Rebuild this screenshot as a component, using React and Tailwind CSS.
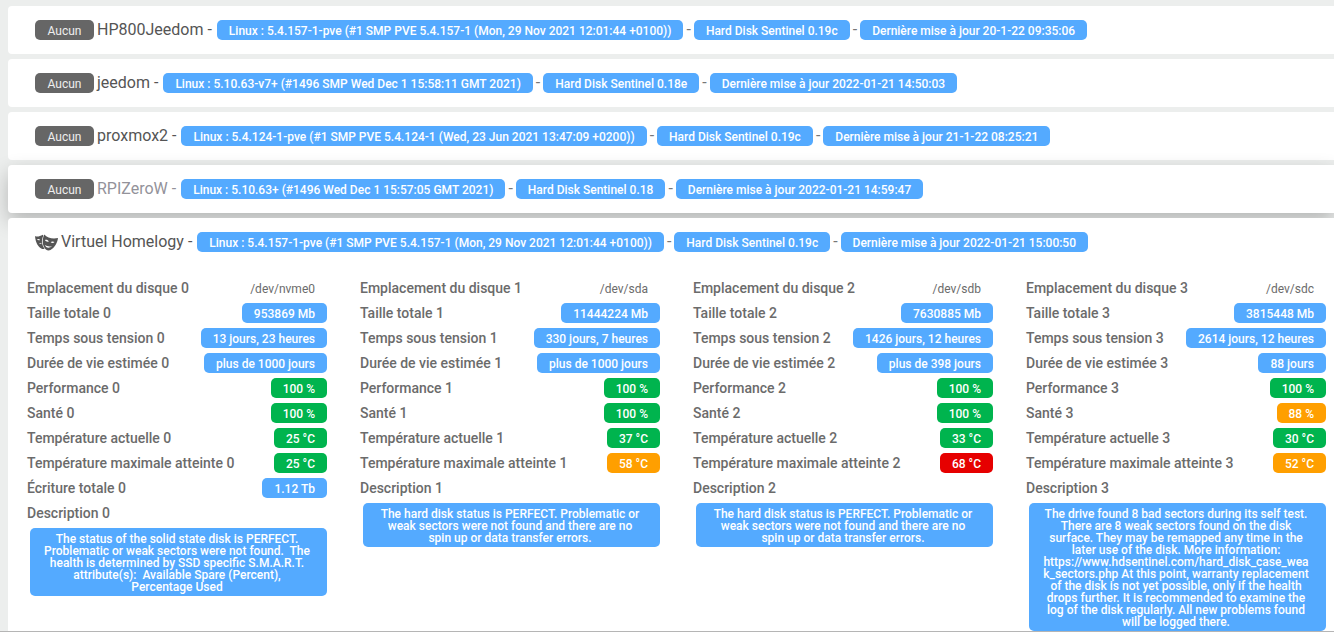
import React from "react";

const COLORS = {
  blue: "bg-[#54aaff]",
  green: "bg-[#00b44e]",
  orange: "bg-[#ff9f00]",
  red: "bg-[#e60000]",
};

const machines = [
  { name: "HP800Jeedom", tags: ["Linux : 5.4.157-1-pve (#1 SMP PVE 5.4.157-1 (Mon, 29 Nov 2021 12:01:44 +0100))", "Hard Disk Sentinel 0.19c", "Dernière mise à jour 20-1-22 09:35:06"] },
  { name: "jeedom", tags: ["Linux : 5.10.63-v7+ (#1496 SMP Wed Dec 1 15:58:11 GMT 2021)", "Hard Disk Sentinel 0.18e", "Dernière mise à jour 2022-01-21 14:50:03"] },
  { name: "proxmox2", tags: ["Linux : 5.4.124-1-pve (#1 SMP PVE 5.4.124-1 (Wed, 23 Jun 2021 13:47:09 +0200))", "Hard Disk Sentinel 0.19c", "Dernière mise à jour 21-1-22 08:25:21"] },
  { name: "RPIZeroW", raised: true, tags: ["Linux : 5.10.63+ (#1496 Wed Dec 1 15:57:05 GMT 2021)", "Hard Disk Sentinel 0.18", "Dernière mise à jour 2022-01-21 14:59:47"] },
];

const opened = {
  name: "Virtuel Homelogy",
  icon: true,
  tags: ["Linux : 5.4.157-1-pve (#1 SMP PVE 5.4.157-1 (Mon, 29 Nov 2021 12:01:44 +0100))", "Hard Disk Sentinel 0.19c", "Dernière mise à jour 2022-01-21 15:00:50"],
};

const PERFECT = "The hard disk status is PERFECT. Problematic or weak sectors were not found and there are no spin up or data transfer errors.";

const disks = [
  {
    path: "/dev/nvme0",
    rows: [
      ["Taille totale", "953869 Mb", "blue"],
      ["Temps sous tension", "13 jours, 23 heures", "blue"],
      ["Durée de vie estimée", "plus de 1000 jours", "blue"],
      ["Performance", "100 %", "green"],
      ["Santé", "100 %", "green"],
      ["Température actuelle", "25 °C", "green"],
      ["Température maximale atteinte", "25 °C", "green"],
      ["Écriture totale", "1.12 Tb", "blue"],
    ],
    description: "The status of the solid state disk is PERFECT. Problematic or weak sectors were not found.\u00a0 The health is determined by SSD specific S.M.A.R.T. attribute(s):\u00a0 Available Spare (Percent), Percentage Used",
  },
  {
    path: "/dev/sda",
    rows: [
      ["Taille totale", "11444224 Mb", "blue"],
      ["Temps sous tension", "330 jours, 7 heures", "blue"],
      ["Durée de vie estimée", "plus de 1000 jours", "blue"],
      ["Performance", "100 %", "green"],
      ["Santé", "100 %", "green"],
      ["Température actuelle", "37 °C", "green"],
      ["Température maximale atteinte", "58 °C", "orange"],
    ],
    description: PERFECT,
  },
  {
    path: "/dev/sdb",
    rows: [
      ["Taille totale", "7630885 Mb", "blue"],
      ["Temps sous tension", "1426 jours, 12 heures", "blue"],
      ["Durée de vie estimée", "plus de 398 jours", "blue"],
      ["Performance", "100 %", "green"],
      ["Santé", "100 %", "green"],
      ["Température actuelle", "33 °C", "green"],
      ["Température maximale atteinte", "68 °C", "red"],
    ],
    description: PERFECT,
  },
  {
    path: "/dev/sdc",
    rows: [
      ["Taille totale", "3815448 Mb", "blue"],
      ["Temps sous tension", "2614 jours, 12 heures", "blue"],
      ["Durée de vie estimée", "88 jours", "blue"],
      ["Performance", "100 %", "green"],
      ["Santé", "88 %", "orange"],
      ["Température actuelle", "30 °C", "green"],
      ["Température maximale atteinte", "52 °C", "orange"],
    ],
    description: "The drive found 8 bad sectors during its self test. There are 8 weak sectors found on the disk surface. They may be remapped any time in the later use of the disk. More information: https://www.hdsentinel.com/hard_disk_case_weak_sectors.php At this point, warranty replacement of the disk is not yet possible, only if the health drops further. It is recommended to examine the log of the disk regularly. All new problems found will be logged there.",
  },
];

function MasksIcon() {
  return (
    <svg viewBox="0 0 22 16" className="h-[17px] w-[23px]" fill="currentColor" aria-hidden="true">
      <path
        fillRule="evenodd"
        d="M0 1.8C1.5 2.8 4.6 2.4 7.4 .6L8 1.6C6.8 3.8 6.4 6.4 6.8 8.8C7.2 11 8 12.6 9.2 14C8.2 14.5 7 14.4 6 13.8C3 12 .6 8.6 0 1.8ZM2 4.9C2.6 5.8 3.8 6 5 5.5C4.2 4.7 3 4.4 2 4.9ZM3.8 9.6C4.3 8.7 5 8.3 5.9 8.2L6.2 9.2C5.4 9.1 4.5 9.2 3.8 9.6Z"
      />
      <path
        fillRule="evenodd"
        d="M8.9 .4C11.8 3.8 17 5 22 3.8C21.6 8 18.6 13.4 14.8 15.2C13.3 15.9 11.7 15.7 10.4 14.6C6.9 11.4 6.5 5 8.9 .4ZM9.5 5.6C10.2 7 11.8 7.6 13.2 7C12.5 5.6 11 5 9.5 5.6ZM14.9 7.6C15.9 8.7 17.6 8.7 18.7 7.6C17.6 6.7 16.1 6.7 14.9 7.6ZM9.4 10.5C10.4 13.2 13.4 13.9 16.2 11.6C13.6 12.1 11.2 11.7 9.4 10.5Z"
      />
    </svg>
  );
}

function Badge({ color, children }) {
  return (
    <span className={`inline-block h-5 rounded-[5px] px-3 text-xs leading-[22px] font-medium whitespace-nowrap text-white ${COLORS[color]}`}>
      {children}
    </span>
  );
}

function Heading({ machine }) {
  return (
    <h2 className="flex h-12 items-center pl-[27px] text-base whitespace-nowrap text-[#777777]">
      <a href="#" className={`flex items-center gap-[3px] ${machine.raised ? "text-[#93929a]" : "text-[#555555]"}`}>
        {machine.icon ? (
          <MasksIcon />
        ) : (
          <span className="inline-block h-5 min-w-[59px] rounded-[5px] bg-[#666666] px-3 text-center text-xs leading-[22px] text-[#eeeeee]">Aucun</span>
        )}
        <span>{machine.name} -</span>
      </a>
      <span className="ml-[5px] flex items-center gap-[3px]">
        {machine.tags.map((tag, i) => (
          <React.Fragment key={tag}>
            {i > 0 && <span>-</span>}
            <Badge color="blue">{tag}</Badge>
          </React.Fragment>
        ))}
      </span>
    </h2>
  );
}

function Disk({ disk, index }) {
  return (
    <div className="min-w-0">
      <table className="block w-full">
        <tbody className="block">
          <tr className="flex h-[25px] justify-between pt-[2px]">
            <th scope="row" className="text-left text-sm leading-5 font-medium">Emplacement du disque {index}</th>
            <td className="pr-3 text-xs leading-[22px]">{disk.path}</td>
          </tr>
          {disk.rows.map(([label, value, color]) => (
            <tr key={label} className="flex h-[25px] justify-between pt-[2px]">
              <th scope="row" className="text-left text-sm leading-5 font-medium">{label} {index}</th>
              <td className="flex"><Badge color={color}>{value}</Badge></td>
            </tr>
          ))}
          <tr className="flex h-[25px] pt-[2px]">
            <th scope="row" className="text-left text-sm leading-5 font-medium">Description {index}</th>
          </tr>
        </tbody>
      </table>
      <p className="mt-[2px] ml-[3px] rounded-[5px] bg-[#54aaff] pt-[5px] pr-[15px] pb-[3px] pl-3 text-center text-xs leading-3 font-medium break-words text-white">
        {disk.description}
      </p>
    </div>
  );
}

export default function App() {
  return (
    <div className="flex min-h-screen flex-col overflow-hidden border-b border-[#b5b5b5] bg-[#eceeed] pt-[6px] pl-2 font-['Roboto',sans-serif]">
      <div className="flex flex-1 flex-col gap-[5px]">
        {machines.map((m) => (
          <section
            key={m.name}
            className={`rounded-l-[4px] bg-white ${m.raised ? "relative shadow-[0_8px_20px_rgba(0,0,0,0.24)]" : ""}`}
          >
            <Heading machine={m} />
          </section>
        ))}
        <section className="relative flex-1 rounded-tl-[4px] bg-white">
          <Heading machine={opened} />
          <div className="mt-[10px] grid grid-cols-4 gap-[33px] pr-2 pl-[19px] text-[#6b6b6b]">
            {disks.map((disk, i) => (
              <Disk key={disk.path} disk={disk} index={i} />
            ))}
          </div>
        </section>
      </div>
    </div>
  );
}
